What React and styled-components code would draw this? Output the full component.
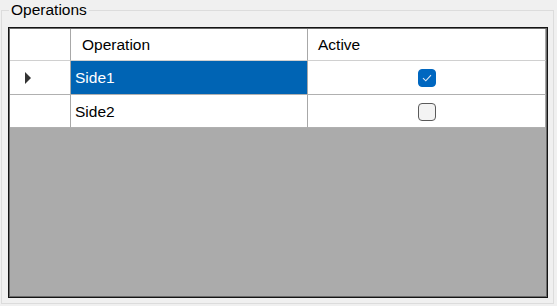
import React from "react";
import styled, { createGlobalStyle } from "styled-components";

const GlobalStyle = createGlobalStyle`
  html, body {
    margin: 0;
    padding: 0;
    background: #f0f0f0;
  }
  body {
    font-family: "Segoe UI", "Liberation Sans", Arial, sans-serif;
    font-size: 15.5px;
    color: #000;
  }
`;

const Page = styled.div`
  width: 557px;
  height: 306px;
  overflow: hidden;
  background: #f0f0f0;
`;

const GroupBox = styled.fieldset`
  box-sizing: border-box;
  width: 553px;
  height: 303px;
  margin: 1px 0 0 1px;
  padding: 8px 0 0 6px;
  border: 1px solid #dcdcdc;
  border-radius: 0;
  min-width: 0;
`;

const Title = styled.legend`
  margin-left: 1px;
  padding: 0 2px;
  line-height: 18px;
  font-size: 15.5px;
  color: #000;
`;

const Grid = styled.div`
  box-sizing: border-box;
  width: 540px;
  height: 271px;
  border: 1px solid #141414;
  box-shadow: inset 0 0 0 1px #6a6a6a;
  padding: 1px;
  background: #ababab;
  display: grid;
  grid-template-columns: 61px 237px 238px;
  grid-template-rows: 32px 34px 33px;
  align-content: start;
`;

const Cell = styled.div`
  box-sizing: border-box;
  display: flex;
  align-items: center;
  justify-content: ${(p) => (p.$center ? "center" : "flex-start")};
  padding-left: ${(p) => (p.$center ? 0 : p.$pad || 4)}px;
  padding-top: 1px;
  background: ${(p) => (p.$selected ? "#0064b4" : "#fff")};
  color: ${(p) => (p.$selected ? "#fff" : "#000")};
  border-right: 1px solid #a8a8a8;
  border-bottom: 1px solid ${(p) => (p.$header ? "#d0d0d0" : "#b0b0b0")};
  white-space: nowrap;
`;

const RowPointer = styled.span`
  width: 0;
  height: 0;
  margin-left: 11px;
  border-top: 6px solid transparent;
  border-bottom: 6px solid transparent;
  border-left: 6px solid #333;
`;

const Check = styled.span`
  box-sizing: border-box;
  width: 18px;
  height: 18px;
  border-radius: 4px;
  display: flex;
  align-items: center;
  justify-content: center;
  background: ${(p) => (p.$checked ? "#0067c0" : "#f3f3f3")};
  border: ${(p) => (p.$checked ? "1px solid #0067c0" : "1.5px solid #5a5a5a")};
`;

const rows = [
  { name: "Side1", active: true, current: true },
  { name: "Side2", active: false, current: false },
];

export default function App() {
  return (
    <Page>
      <GlobalStyle />
      <GroupBox>
        <Title>Operations</Title>
        <Grid>
          <Cell $header />
          <Cell $header $pad={11}>Operation</Cell>
          <Cell $header $pad={10}>Active</Cell>
          {rows.map((r) => (
            <React.Fragment key={r.name}>
              <Cell>{r.current && <RowPointer />}</Cell>
              <Cell $selected={r.current}>{r.name}</Cell>
              <Cell $center>
                <Check $checked={r.active}>
                  {r.active && (
                    <svg width="10" height="8" viewBox="0 0 10 8">
                      <path
                        d="M1 4.2 L3.8 6.8 L9 1.2"
                        fill="none"
                        stroke="#dfe9f5"
                        strokeWidth="1.1"
                      />
                    </svg>
                  )}
                </Check>
              </Cell>
            </React.Fragment>
          ))}
        </Grid>
      </GroupBox>
    </Page>
  );
}
